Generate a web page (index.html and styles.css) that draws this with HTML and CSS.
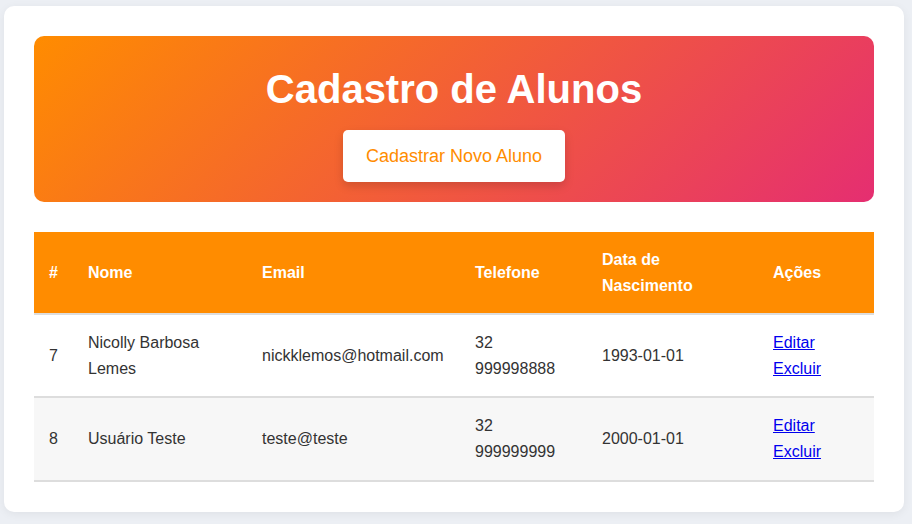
FILE: index.html
```
<!DOCTYPE html>
<html lang="pt-BR">
<head>
<meta charset="utf-8">
<title>Cadastro de Alunos</title>
<link rel="stylesheet" href="styles.css">
</head>
<body>
<div class="card">
  <header class="hero">
    <h1 class="title">Cadastro de Alunos</h1>
    <button class="btn">Cadastrar Novo Aluno</button>
  </header>
  <table class="tbl">
    <colgroup>
      <col class="c-id"><col class="c-nome"><col class="c-email"><col class="c-tel"><col class="c-data"><col class="c-acoes">
    </colgroup>
    <thead>
      <tr><th>#</th><th>Nome</th><th>Email</th><th>Telefone</th><th>Data de Nascimento</th><th>Ações</th></tr>
    </thead>
    <tbody>
      <tr>
        <td>7</td><td>Nicolly Barbosa Lemes</td><td>nickklemos@hotmail.com</td><td>32 999998888</td><td>1993-01-01</td>
        <td><a href="#">Editar</a><br><a href="#">Excluir</a></td>
      </tr>
      <tr class="alt">
        <td>8</td><td>Usuário Teste</td><td>teste@teste</td><td>32 999999999</td><td>2000-01-01</td>
        <td><a href="#">Editar</a><br><a href="#">Excluir</a></td>
      </tr>
    </tbody>
  </table>
</div>
</body>
</html>
```
FILE: styles.css
```
html, body {
  margin: 0;
  padding: 0;
  background: #eceff4;
}
body {
  font-family: "Liberation Sans", Arial, sans-serif;
  color: #333;
  padding: 6px 8px 12px 4px;
}
.card {
  width: 840px;
  background: #fff;
  border-radius: 10px;
  padding: 30px;
  box-shadow: 0 2px 10px rgba(0, 0, 0, 0.06);
}
.hero {
  background: linear-gradient(135deg, #ff8c00 0%, #e52e71 100%);
  border-radius: 10px;
  padding: 30px 20px 20px;
  text-align: center;
  margin-bottom: 30px;
}
.title {
  margin: 0 0 18px;
  font-size: 40px;
  line-height: 46px;
  font-weight: bold;
  color: #fff;
}
.btn {
  font-family: inherit;
  font-size: 18px;
  line-height: 22px;
  width: 222px;
  padding: 15px 0;
  color: #ff8c00;
  background: #fff;
  border: none;
  border-radius: 5px;
  box-shadow: 0 4px 10px rgba(0, 0, 0, 0.15);
}
.tbl {
  width: 840px;
  border-collapse: collapse;
  table-layout: fixed;
  font-size: 16px;
  line-height: 1.6;
}
.c-id { width: 39px; }
.c-nome { width: 174px; }
.c-email { width: 213px; }
.c-tel { width: 127px; }
.c-data { width: 171px; }
.c-acoes { width: 116px; }
.tbl th, .tbl td {
  padding: 15px;
  text-align: left;
  vertical-align: middle;
  border-bottom: 2px solid #ddd;
}
.tbl th {
  background: #ff8c00;
  color: #fff;
  font-weight: bold;
}
.alt td {
  background: #f7f7f7;
}
.tbl a {
  color: #0000ee;
  text-decoration: underline;
}
```
